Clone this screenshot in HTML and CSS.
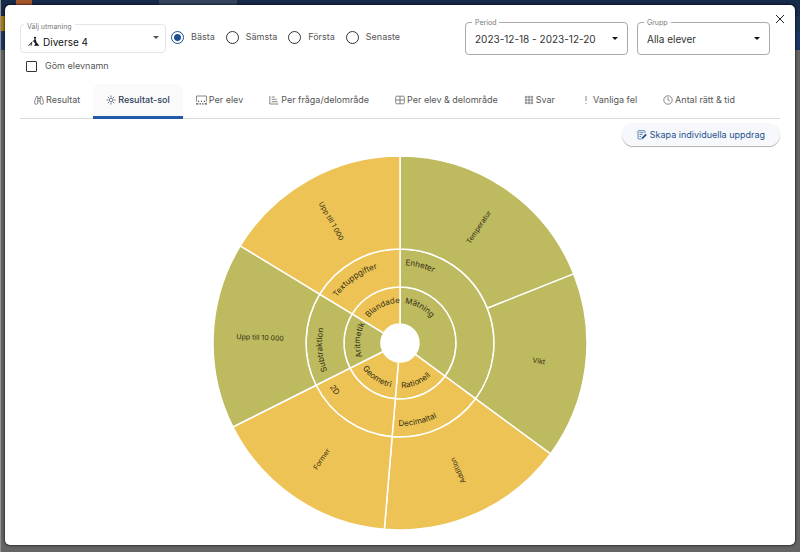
FILE: index.html
```html
<!DOCTYPE html>
<html lang="sv">
<head>
<meta charset="utf-8">
<title>Resultat-sol</title>
<link rel="stylesheet" href="styles.css">
</head>
<body>
<div class="backdrop" aria-hidden="true">
  <div class="app-bar"><span class="app-logo"></span><span class="app-tab"></span></div>
  <div class="app-nav"><span class="nav-mark"></span></div>
  <div class="app-sub"></div>
</div>
<main class="dialog">
  <button class="close" type="button" aria-label="Stäng">
    <svg viewBox="0 0 10 10"><path d="M1 1l8 8M9 1l-8 8"/></svg>
  </button>
  <header class="toolbar">
    <div class="filters">
      <div class="filter-row">
        <div class="field challenge">
          <label for="challenge">Välj utmaning</label>
          <svg class="field-icon" viewBox="0 0 12 12"><circle cx="7" cy="2.800" r="1.100"/><path d="M6.300 4.200h1.500l.6 3 3 3.600H6l1.500-2-1.400-1.300z"/><path class="line" d="M6.300 4.800L4.800 7M.4 10.800l3.200-3.600v3.200M2 10.600l.8-1.200"/></svg>
          <select id="challenge"><option>Diverse 4</option></select>
          <svg class="caret" viewBox="0 0 6 4"><path d="M0 0h6L3 3z"/></svg>
        </div>
        <label class="choice"><input type="radio" name="mode" checked>Bästa</label>
        <label class="choice"><input type="radio" name="mode">Sämsta</label>
        <label class="choice"><input type="radio" name="mode">Första</label>
        <label class="choice"><input type="radio" name="mode">Senaste</label>
      </div>
      <label class="choice hide-names"><input type="checkbox">Göm elevnamn</label>
    </div>
    <div class="scope">
      <div class="field outlined period">
        <label for="period">Period</label>
        <select id="period"><option>2023-12-18 - 2023-12-20</option></select>
        <svg class="caret" viewBox="0 0 6 4"><path d="M0 0h6L3 3z"/></svg>
      </div>
      <div class="field outlined group">
        <label for="group">Grupp</label>
        <select id="group"><option>Alla elever</option></select>
        <svg class="caret" viewBox="0 0 6 4"><path d="M0 0h6L3 3z"/></svg>
      </div>
    </div>
  </header>
  <nav class="tabs">
    <a href="#resultat"><svg viewBox="0 0 10 10"><path d="M2.400 1.500h1.400v6.200a1.600 1.600 0 1 1-3.200 0C.6 5.400 1.600 4 2.400 1.500zM7.600 1.500H6.200v6.200a1.600 1.600 0 1 0 3.200 0C9.400 5.400 8.400 4 7.600 1.500zM3.800 3.500h2.400M3.800 6h2.400"/></svg>Resultat</a>
    <a href="#sol" class="active" aria-current="page"><svg viewBox="0 0 10 10"><circle cx="5" cy="5" r="1.800"/><path d="M5 .5v1.700M5 7.800v1.700M.5 5h1.700M7.800 5h1.700M1.800 1.800L3 3M7 7l1.200 1.200M8.200 1.800L7 3M3 7L1.800 8.200"/></svg>Resultat-sol</a>
    <a href="#elev"><svg class="wide" viewBox="0 0 11 10"><path d="M.5 6.500V1h10v5.500"/><path class="solid" d="M1.900 5.800h1.200V7H1.900zM4.900 5.800h1.200V7H4.900zM7.900 5.800h1.200V7H7.900zM0 8.200h2.400v1.200H0zM3.500 8.200h1.500v1.200H3.500zM6 8.200h1.500v1.200H6zM8.600 8.200H11v1.200H8.600z"/></svg>Per elev</a>
    <a href="#fraga"><svg viewBox="0 0 10 10"><path d="M.8 1v8h8.700M2.700 2h3M2.700 4.300h5M2.700 6.700h6"/></svg>Per fråga/delområde</a>
    <a href="#delomrade"><svg viewBox="0 0 10 10"><rect x=".7" y="1.200" width="8.600" height="7.600" rx="1"/><path d="M5 1.200v7.600M.7 5h8.600"/></svg>Per elev &amp; delområde</a>
    <a href="#svar"><svg viewBox="0 0 10 10"><path d="M2 .8v8.400M5 .8v8.400M8 .8v8.400M.8 2h8.400M.8 5h8.400M.8 8h8.400"/></svg>Svar</a>
    <a href="#fel"><svg viewBox="0 0 10 10"><path d="M5 1v5.400M5 8v1"/></svg>Vanliga fel</a>
    <a href="#tid"><svg viewBox="0 0 10 10"><circle cx="5" cy="5" r="4.200"/><path d="M5 2.300V5l1.800 1"/></svg>Antal rätt &amp; tid</a>
  </nav>
  <div class="actions">
    <button class="assign" type="button"><svg viewBox="0 0 10 10"><path d="M8 3V1.500a.8.8 0 0 0-.8-.8H1.800a.8.8 0 0 0-.8.800v6.700a.8.8 0 0 0 .8.800h2.500M2.500 2.700h4M2.500 4.600h3M2.500 6.500h1.500"/><path class="solid" d="M8.500 3.700l1.300 1.200-3.400 3.600-1.900.8.600-2z"/></svg>Skapa individuella uppdrag</button>
  </div>
  <svg class="sunburst" id="sunburst" viewBox="-188 -188 376 376" role="img" aria-label="Resultat-sol"></svg>
</main>
<script src="chart.js"></script>
</body>
</html>
```
FILE: styles.css
```css
* { box-sizing: border-box; }

body {
  margin: 0;
  min-height: 100vh;
  padding: 5px 5px 7px;
  display: flex;
  background: #646464;
  font-family: Inter, "Liberation Sans", sans-serif;
  font-size: 9px;
  line-height: 12px;
  color: #555;
}

.backdrop {
  position: absolute;
  inset: 0;
  border-left: 1px solid #929292;
}

.app-bar {
  display: flex;
  height: 16px;
  background: #162a4a;
}

.app-logo {
  width: 16px;
  margin-left: 15px;
  background: #a5552a;
}

.app-tab {
  width: 78px;
  margin-left: 127px;
  background: #33445c;
}

.app-nav {
  height: 15px;
  background: #1c3350;
}

.nav-mark {
  display: block;
  width: 16px;
  height: 15px;
  background: #a67c10;
}

.app-sub {
  height: 19px;
  background: #1c3566;
}

.dialog {
  position: relative;
  flex: 1;
  min-width: 0;
  padding: 17px 15px 14px;
  background: #fff;
  border-radius: 5px;
  box-shadow: 0 0 2px 1px rgba(0, 0, 0, 0.5);
}

.close {
  position: absolute;
  top: 9px;
  right: 10px;
  width: 10px;
  height: 10px;
  padding: 0;
  border: 0;
  background: none;
}

.close svg {
  display: block;
  fill: none;
  stroke: #222;
}

.toolbar {
  display: flex;
  justify-content: space-between;
  align-items: flex-start;
  padding-right: 10px;
}

.filters { padding-top: 2px; }

.filter-row {
  display: flex;
  align-items: center;
  gap: 11px;
}

.field { position: relative; }

.field label {
  position: absolute;
  top: -2px;
  left: 4px;
  padding: 0 3px;
  background: #fff;
  font-size: 7px;
  line-height: 10px;
  color: #777;
}

.field select {
  appearance: none;
  display: block;
  width: 100%;
  height: 29px;
  padding: 0 20px 0 22px;
  border: 1px solid #e4e4e4;
  border-radius: 4px;
  background: #fff;
  font: 400 10px/12px Inter, "Liberation Sans", sans-serif;
  color: #111;
}

.challenge {
  width: 146px;
  margin-right: -6px;
}

.challenge select { padding-top: 6px; }

.field-icon {
  position: absolute;
  left: 8px;
  top: 11px;
  width: 12px;
  height: 12px;
  fill: #111;
}

.field-icon .line {
  fill: none;
  stroke: #111;
  stroke-width: 0.8px;
}

.caret {
  position: absolute;
  right: 7px;
  top: 12px;
  width: 6px;
  height: 4px;
  fill: #555;
}

.outlined select {
  height: 33px;
  padding: 0 20px 0 9px;
  border-color: #aaa;
  color: #333;
}

.outlined label {
  top: -4px;
  left: 7px;
}

.outlined .caret {
  right: 10px;
  top: 15px;
  fill: #111;
}

.scope {
  display: flex;
  gap: 9px;
}

.period { width: 163px; }
.group { width: 133px; }

.choice {
  display: flex;
  align-items: center;
  gap: 7px;
  font-size: 9px;
}

.choice input {
  appearance: none;
  flex: none;
  width: 13px;
  height: 13px;
  margin: 0;
  border: 1px solid #333;
  border-radius: 50%;
}

.filter-row .choice { margin-top: -3px; }

.choice input:checked {
  border-color: #1f4f91;
  background: radial-gradient(circle, #1f4f91 3px, #fff 4px);
}

.choice input[type="checkbox"] {
  width: 11px;
  height: 11px;
  border-radius: 1px;
}

.hide-names {
  gap: 8px;
  margin: 7px 0 0 6px;
}

.tabs {
  display: flex;
  margin-top: 12px;
  padding-left: 1px;
  border-bottom: 1px solid #dcdcdc;
}

.tabs a {
  display: flex;
  align-items: center;
  gap: 2px;
  height: 35px;
  margin-bottom: -1px;
  padding: 0 13px;
  border-bottom: 3px solid transparent;
  border-radius: 7px 7px 0 0;
  color: #555;
  text-decoration: none;
  white-space: nowrap;
}

.tabs .active {
  border-image: linear-gradient(#2459a5, #2459a5) 0 0 3 0;
  background: #fafafa;
  font-weight: 500;
  color: #2c3a57;
}

.tabs svg,
.assign svg {
  width: 10px;
  height: 10px;
  fill: none;
  stroke: currentColor;
  stroke-width: 0.7px;
}

.tabs .wide { width: 11px; }

.tabs .solid,
.assign .solid {
  fill: currentColor;
  stroke: none;
}

.actions {
  display: flex;
  justify-content: flex-end;
  margin-top: 4px;
}

.assign {
  display: flex;
  align-items: center;
  gap: 3px;
  height: 23px;
  padding: 0 15px;
  border: 0;
  border-radius: 12px;
  background: #f7f8fb;
  box-shadow: 0 1px 1px rgba(0, 0, 0, 0.3);
  font: 400 9px/12px Inter, "Liberation Sans", sans-serif;
  color: #24508c;
}

.sunburst {
  display: block;
  width: 376px;
  max-width: 100%;
  margin: 9px auto 0;
}

.slice {
  stroke: #fff;
  stroke-width: 1.5px;
}

.good { fill: #bdba5f; }
.fair { fill: #eec355; }

.sunburst text {
  fill: #332f14;
  font-size: 7px;
}

.sunburst .arc-label { font-size: 8px; }

.guide { fill: none; }
```
FILE: chart.js
```js
const NS = "http://www.w3.org/2000/svg";
const chart = document.getElementById("sunburst");

// Ring radii from the hole outwards
const rings = [19, 56, 94, 187];

// Angles are degrees clockwise from the top
const areas = [
  { from: 0, to: 126.4, level: "good", names: ["Mätning", "Enheter"], starts: [7, 4],
    parts: [{ name: "Temperatur", to: 68.3 }, { name: "Vikt", to: 126.4 }] },
  { from: 126.4, to: 184.8, level: "fair", names: ["Rationell", "Decimaltal"], starts: [178, 181],
    inward: true, parts: [{ name: "Addition", to: 184.8, turned: true }] },
  { from: 184.8, to: 243.3, level: "fair", names: ["Geometri", "2D"], starts: [236, 238],
    inward: true, parts: [{ name: "Former", to: 243.3 }] },
  { from: 243.3, to: 301.3, level: "good", names: ["Aritmetik", "Subtraktion"], starts: [250, 249],
    parts: [{ name: "Upp till 10 000", to: 301.3 }] },
  { from: 301.3, to: 360, level: "fair", names: ["Blandade", "Textuppgifter"], starts: [309, 306],
    parts: [{ name: "Upp till 1 000", to: 360 }] }
];

function point(radius, degrees) {
  const a = degrees * Math.PI / 180;
  return `${radius * Math.sin(a)} ${-radius * Math.cos(a)}`;
}

function add(tag, attributes, parent = chart) {
  const node = document.createElementNS(NS, tag);
  for (const key in attributes) node.setAttribute(key, attributes[key]);
  return parent.appendChild(node);
}

function slice(ring, from, to, level) {
  const inner = rings[ring], outer = rings[ring + 1];
  add("path", {
    class: `slice ${level}`,
    d: `M${point(inner, from)}L${point(outer, from)}A${outer} ${outer} 0 0 1 ${point(outer, to)}` +
       `L${point(inner, to)}A${inner} ${inner} 0 0 0 ${point(inner, from)}Z`
  });
}

function arcLabel(name, radius, start, inward) {
  const end = inward ? start - 100 : start + 100;
  const id = `guide-${radius}-${start}`;
  add("path", { id, class: "guide", d: `M${point(radius, start)}A${radius} ${radius} 0 0 ${inward ? 0 : 1} ${point(radius, end)}` });
  const text = add("text", { class: "arc-label" });
  add("textPath", { href: `#${id}` }, text).textContent = name;
}

function radialLabel(part, from) {
  const middle = (from + part.to) / 2;
  const flip = middle > 180 || part.turned ? 180 : 0;
  add("text", {
    "text-anchor": "middle",
    "dominant-baseline": "central",
    transform: `translate(${point(140, middle)}) rotate(${middle - 90 + flip})`
  }).textContent = part.name;
}

for (const area of areas) {
  slice(0, area.from, area.to, area.level);
  slice(1, area.from, area.to, area.level);
  let from = area.from;
  for (const part of area.parts) {
    slice(2, from, part.to, area.level);
    from = part.to;
  }
}

for (const area of areas) {
  area.names.forEach((name, i) => {
    const radius = (area.inward ? 45 : 40) + 38 * i;
    arcLabel(name, radius, area.starts[i], area.inward);
  });
  let from = area.from;
  for (const part of area.parts) {
    radialLabel(part, from);
    from = part.to;
  }
}
```
